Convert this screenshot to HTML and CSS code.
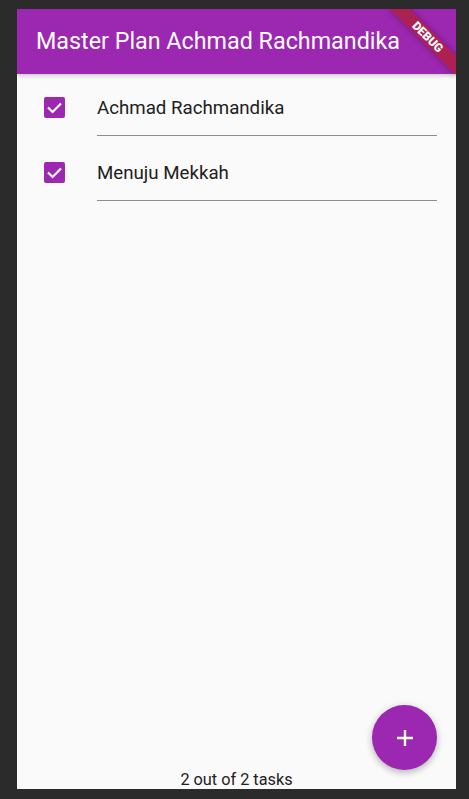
FILE: index.html
```html
<!DOCTYPE html>
<html>
<head>
<meta charset="utf-8">
<link rel="stylesheet" href="styles.css">
</head>
<body>
<div class="screen">
  <header class="appbar">
    <h1 class="title">Master Plan Achmad Rachmandika</h1>
  </header>
  <main class="list">
    <div class="row">
      <span class="checkbox"><svg viewBox="0 0 21 21" width="21" height="21"><polyline points="4,10.5 8.6,15 17,6.4" fill="none" stroke="#fff" stroke-width="2.2"/></svg></span>
      <div class="field">Achmad Rachmandika</div>
    </div>
    <div class="row">
      <span class="checkbox"><svg viewBox="0 0 21 21" width="21" height="21"><polyline points="4,10.5 8.6,15 17,6.4" fill="none" stroke="#fff" stroke-width="2.2"/></svg></span>
      <div class="field">Menuju Mekkah</div>
    </div>
  </main>
  <footer class="footer">2 out of 2 tasks</footer>
  <button class="fab" aria-label="Add"><svg viewBox="0 0 24 24" width="24" height="24"><path d="M12 4v16M4 12h16" stroke="#fff" stroke-width="2.4" fill="none"/></svg></button>
  <div class="banner">DEBUG</div>
</div>
</body>
</html>
```

FILE: styles.css
```css
html, body {
  margin: 0;
  padding: 0;
  background: #2b2b2b;
  height: 799px;
  overflow: hidden;
}
.screen {
  position: relative;
  margin: 9px 0 0 17px;
  width: 439px;
  height: 780px;
  background: #fafafa;
  overflow: hidden;
  display: flex;
  flex-direction: column;
  font-family: Roboto, "Noto Sans", sans-serif;
}
.appbar {
  height: 65px;
  flex: none;
  background: #9c27b0;
  display: flex;
  align-items: center;
  padding-left: 19px;
  box-shadow: 0 2px 4px rgba(0,0,0,0.18);
  position: relative;
  z-index: 1;
}
.title {
  margin: 0;
  font-weight: 400;
  font-size: 23.3px;
  color: #fff;
  line-height: 27px;
}
.list {
  flex: 1;
  display: flex;
  flex-direction: column;
}
.row {
  display: flex;
  align-items: flex-start;
  height: 65px;
  box-sizing: border-box;
  padding-top: 23px;
}
.checkbox {
  width: 21px;
  height: 21px;
  margin-left: 27px;
  margin-right: 32px;
  background: #9c27b0;
  border-radius: 2px;
  display: flex;
  flex: none;
}
.field {
  flex: 1;
  margin-right: 19px;
  height: 38px;
  border-bottom: 1px solid #8e8e8e;
  font-size: 18.7px;
  line-height: 22px;
  color: #212121;
}
.footer {
  flex: none;
  height: 18px;
  line-height: 18px;
  font-size: 16.3px;
  text-align: center;
  color: #212121;
}
.fab {
  position: absolute;
  right: 19px;
  bottom: 19px;
  width: 65px;
  height: 65px;
  border-radius: 50%;
  border: none;
  padding: 0;
  background: #9c27b0;
  display: flex;
  align-items: center;
  justify-content: center;
  box-shadow: 0 3px 6px rgba(0,0,0,0.2), 0 1px 10px rgba(0,0,0,0.1);
}
.banner {
  position: absolute;
  top: 21px;
  right: -18.6px;
  width: 93.4px;
  height: 14px;
  line-height: 14px;
  transform: rotate(45deg);
  background: rgba(183, 28, 28, 0.63);
  box-shadow: 0 0 6px rgba(0,0,0,0.3);
  color: #fff;
  font-weight: 900;
  font-size: 11.9px;
  text-align: center;
  z-index: 2;
}
```
